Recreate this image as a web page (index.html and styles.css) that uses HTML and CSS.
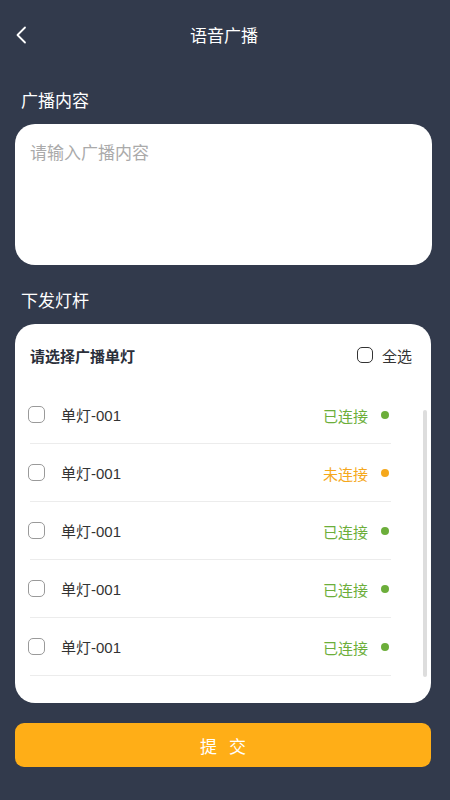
FILE: index.html
```html
<!DOCTYPE html>
<html lang="zh-CN">
<head>
    <meta charset="UTF-8">
    <meta name="viewport" content="width=device-width, initial-scale=1.0">
    <title>语音广播</title>
    <link rel="stylesheet" href="styles.css">
</head>
<body>
    <div class="page">
        <header class="nav">
            <a class="nav-back" href="#">
                <svg width="12" height="18" viewBox="0 0 12 18">
                    <polyline points="10,1.5 2.5,9 10,16.5" fill="none" stroke="#fff" stroke-width="1.8" stroke-linecap="round" stroke-linejoin="round"/>
                </svg>
            </a>
            <h1 class="nav-title">语音广播</h1>
        </header>

        <div class="section-title">广播内容</div>
        <div class="card content-card">
            <textarea class="content-input" placeholder="请输入广播内容"></textarea>
        </div>

        <div class="section-title">下发灯杆</div>
        <div class="card lamp-card">
            <div class="lamp-head">
                <span class="lamp-head-title">请选择广播单灯</span>
                <label class="select-all">
                    <span class="check check-dark"></span>
                    全选
                </label>
            </div>
            <div class="lamp-body">
                <ul class="lamp-list">
                    <li class="lamp-row">
                        <span class="check"></span>
                        <span class="lamp-name">单灯-001</span>
                        <span class="lamp-status on">已连接</span>
                        <span class="dot on"></span>
                    </li>
                    <li class="lamp-row">
                        <span class="check"></span>
                        <span class="lamp-name">单灯-001</span>
                        <span class="lamp-status off">未连接</span>
                        <span class="dot off"></span>
                    </li>
                    <li class="lamp-row">
                        <span class="check"></span>
                        <span class="lamp-name">单灯-001</span>
                        <span class="lamp-status on">已连接</span>
                        <span class="dot on"></span>
                    </li>
                    <li class="lamp-row">
                        <span class="check"></span>
                        <span class="lamp-name">单灯-001</span>
                        <span class="lamp-status on">已连接</span>
                        <span class="dot on"></span>
                    </li>
                    <li class="lamp-row">
                        <span class="check"></span>
                        <span class="lamp-name">单灯-001</span>
                        <span class="lamp-status on">已连接</span>
                        <span class="dot on"></span>
                    </li>
                </ul>
                <div class="scroll-bar"></div>
            </div>
        </div>

        <button class="submit-btn">提交</button>
    </div>
</body>
</html>
```

FILE: styles.css
```css
:root {
    --bg: #323a4c;
    --green: #6cae3a;
    --orange: #f5a81c;
    --yellow: #ffae17;
}

* {
    margin: 0;
    padding: 0;
    box-sizing: border-box;
}

body {
    background-color: var(--bg);
    font-family: "Noto Sans CJK SC", "Noto Sans", sans-serif;
    color: #fff;
    width: 450px;
    height: 800px;
    overflow: hidden;
}

.page {
    padding: 0 18px 0 15px;
}

.nav {
    height: 70px;
    display: flex;
    align-items: center;
    justify-content: center;
    position: relative;
}

.nav-back {
    position: absolute;
    left: 0;
    top: 26px;
    display: flex;
}

.nav-title {
    font-size: 17px;
    font-weight: 400;
    line-height: 24px;
    margin-left: 1px;
}

.section-title {
    font-size: 17px;
    line-height: 24px;
    padding-left: 6px;
}

.nav + .section-title {
    margin-top: 18px;
}

.card {
    background: #fff;
    border-radius: 20px;
    margin-top: 12px;
}

.content-card {
    height: 141px;
    padding: 16px 15px;
    margin-bottom: 23px;
}

.content-input {
    width: 100%;
    height: 100%;
    border: none;
    outline: none;
    resize: none;
    font-family: inherit;
    font-size: 17px;
    line-height: 24px;
    color: #333;
}

.content-input::placeholder {
    color: #aaa;
}

.lamp-card {
    height: 379px;
    margin-right: 1px;
    color: #333;
}

.lamp-head {
    height: 62px;
    display: flex;
    align-items: center;
    justify-content: space-between;
    padding: 0 19px 0 15px;
}

.lamp-head-title {
    font-size: 15px;
    font-weight: 700;
    color: #2b2f3a;
}

.select-all {
    display: flex;
    align-items: center;
    gap: 9px;
    font-size: 15px;
    color: #333;
}

.check {
    width: 17px;
    height: 17px;
    border: 1.5px solid #9a9a9a;
    border-radius: 5px;
    flex-shrink: 0;
}

.check-dark {
    border-color: #333;
    width: 16px;
    height: 16px;
}

.lamp-body {
    display: flex;
    padding-left: 13px;
}

.lamp-list {
    list-style: none;
    width: 363px;
}

.lamp-row {
    height: 58px;
    display: flex;
    align-items: center;
    border-bottom: 1px solid #ececec;
    padding-right: 2px;
    margin-left: 2px;
}

.lamp-row .check {
    margin-left: -2px;
}

.lamp-name {
    flex: 1;
    margin-left: 16px;
    font-family: "Liberation Sans", "Noto Sans CJK SC", sans-serif;
    font-size: 15px;
    color: #333;
    margin-top: -1px;
}

.lamp-status {
    font-size: 15px;
    margin-top: 1px;
}

.lamp-status.on {
    color: var(--green);
}

.lamp-status.off {
    color: var(--orange);
}

.dot {
    width: 8px;
    height: 8px;
    border-radius: 50%;
    margin-left: 13px;
}

.dot.on {
    background: var(--green);
}

.dot.off {
    background: var(--orange);
}

.scroll-bar {
    width: 4px;
    height: 267px;
    margin: 24px 0 0 32px;
    background: #dddddd;
    border-radius: 2px;
}

.submit-btn {
    display: block;
    width: 416px;
    height: 44px;
    margin-top: 20px;
    border: none;
    border-radius: 9px;
    background: var(--yellow);
    color: #fff;
    font-family: inherit;
    font-size: 17px;
    letter-spacing: 12px;
    padding-left: 12px;
}
```
